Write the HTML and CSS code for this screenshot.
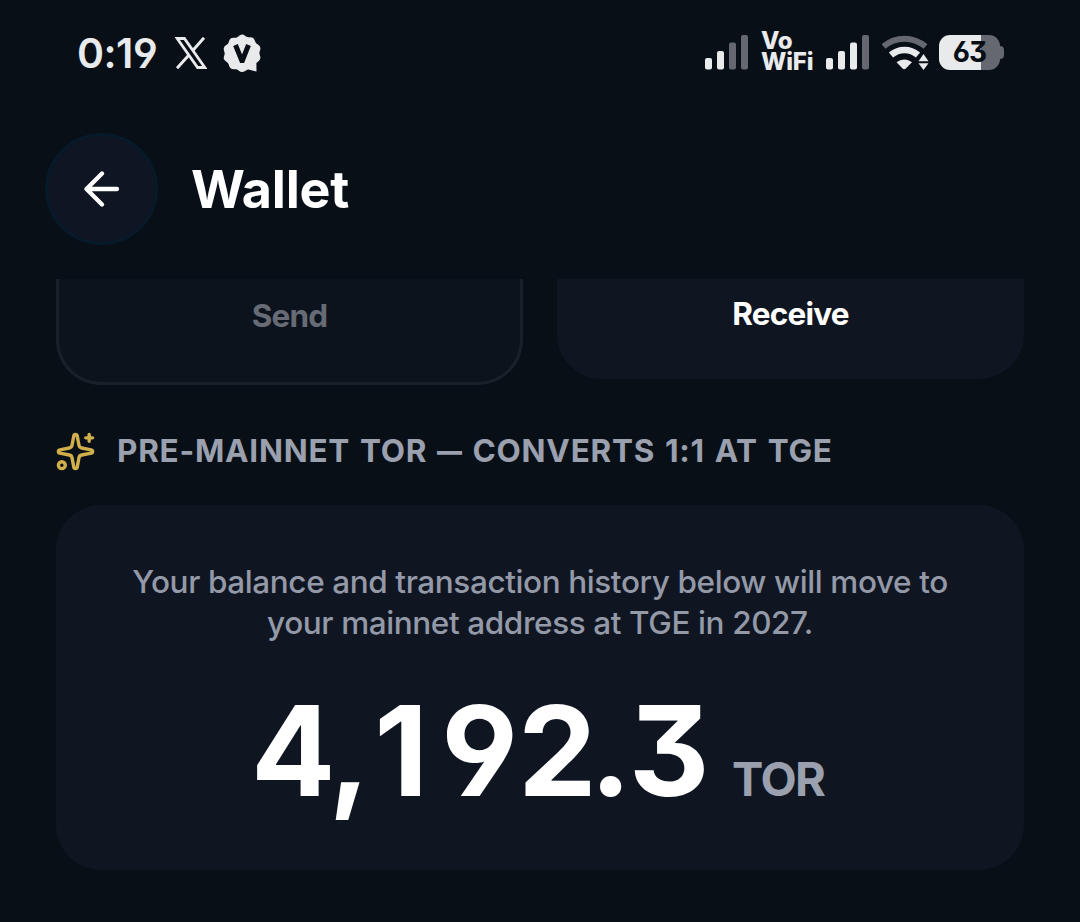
FILE: index.html
```html
<!DOCTYPE html>
<html lang="en">
<head>
<meta charset="utf-8">
<title>Wallet</title>
<link rel="stylesheet" href="styles.css">
</head>
<body>
<div class="status">
  <span class="clock">0:19</span>
  <svg class="x-logo" width="32" height="32" viewBox="0 0 32 32" fill="none" stroke="#e8eaeb"><path d="M2.200 1.500h7.200l20.400 29h-7.200z" stroke-width="2.800"/><path d="M29 .8 17.800 13.600M13.700 18.200 2 31.200" stroke-width="3"/></svg>
  <svg class="badge" width="38" height="38" viewBox="0 0 38 38"><path fill="#e8eaeb" d="M19 .5c2.300 0 3.400 2.100 5.200 2.600s4-.6 5.900.8 1.700 3.700 2.900 5.200 3.500 2 4.200 4.200-.8 3.900-.8 5.700 1.500 3.500.8 5.700-2.700 2.900-3.800 4.400l.1 8.400c-2.200-.5-4.200-1.100-6-1.500-1.400-.2-2.200-.7-3.400-.1-1.700.5-2.800 2-5.100 2s-3.400-2-5.200-2.500-4 .6-5.900-.8-1.700-3.800-2.800-5.300-3.500-2-4.200-4.200.8-3.900.8-5.700-1.500-3.500-.8-5.700 3.100-2.700 4.200-4.200.9-3.900 2.800-5.200 4.100-.2 5.900-.8S16.700.5 19 .5z"/><path fill="none" stroke="#080f17" stroke-width="5" d="m12.500 11 6.300 15.500h.6L25.500 11"/></svg>
  <div class="indicators">
    <svg width="44" height="36" viewBox="0 0 44 36" fill="#e8eaeb"><rect x="0" y="23" width="7" height="11.500" rx="2"/><rect x="12" y="16" width="7" height="18.500" rx="2"/><g fill="#65686e"><rect x="24" y="7.500" width="7" height="27" rx="2"/><rect x="36" y="0" width="7" height="34.500" rx="2"/></g></svg>
    <div class="vowifi"><span>Vo</span><span>WiFi</span></div>
    <svg class="bars2" width="44" height="36" viewBox="0 0 44 36" fill="#e8eaeb"><rect x="0" y="23" width="7" height="11.500" rx="2"/><rect x="12" y="16" width="7" height="18.500" rx="2"/><rect x="24" y="7.500" width="7" height="27" rx="2"/><rect x="36" y="0" width="7" height="34.500" rx="2" fill="#65686e"/></svg>
    <svg class="wifi" width="48" height="36" viewBox="0 0 48 36"><path fill="none" stroke="#65686e" stroke-width="6" d="M1.500 11.500C13.500 1 31 1 43.500 11.500"/><path fill="none" stroke="#e8eaeb" stroke-width="6.500" d="M9 20c8-6.800 19-6.800 27 0"/><path fill="#e8eaeb" d="M14.500 27.300c4.500-3.900 11-3.900 15.500 0l-6.200 6.200q-1.600 1.400-3.200 0z"/><path fill="#080f17" d="m41.500 15.500 7 9v5l-7 7-7-7v-5z"/><path fill="#e8eaeb" d="m41.500 19 5 7.300h-10zM36.500 28.200h10l-5 6.800z"/></svg>
    <div class="battery"><span>63</span></div>
  </div>
</div>
<header class="header">
  <div class="back"><svg width="36" height="36" viewBox="0 0 36 36" fill="none" stroke="#fff" stroke-width="4.300" stroke-linecap="round" stroke-linejoin="round"><path d="M33 18H2.500M18 2.500 2.500 18 18 33.500"/></svg></div>
  <h1 class="title">Wallet</h1>
</header>
<main class="content">
  <div class="actions">
    <div class="action send"><span>Send</span></div>
    <div class="action receive"><span>Receive</span></div>
  </div>
  <div class="section">
    <svg width="41" height="41" viewBox="0 0 24 24" fill="none" stroke="#d1af4b" stroke-width="2" stroke-linecap="round" stroke-linejoin="round"><path d="M11.017 2.814a1 1 0 0 1 1.966 0l1.051 5.558a2 2 0 0 0 1.594 1.594l5.558 1.051a1 1 0 0 1 0 1.966l-5.558 1.051a2 2 0 0 0-1.594 1.594l-1.051 5.558a1 1 0 0 1-1.966 0l-1.051-5.558a2 2 0 0 0-1.594-1.594l-5.558-1.051a1 1 0 0 1 0-1.966l5.558-1.051a2 2 0 0 0 1.594-1.594z"/><path d="M20 2v4M22 4h-4"/><circle cx="4" cy="20" r="2"/></svg>
    <h2>PRE-MAINNET TOR <span class="dash">—</span> CONVERTS 1:1 AT TGE</h2>
  </div>
  <section class="card">
    <p class="note">Your balance and transaction history below will move to<br>your mainnet address at TGE in 2027.</p>
    <div class="balance"><span class="amount"><span class="thousands">4</span><span class="comma">,</span><span class="one">1</span>9<span class="units">2</span>.3</span><span class="unit">TOR</span></div>
  </section>
</main>
</body>
</html>
```
FILE: styles.css
```css
* { box-sizing: border-box; }
body {
  margin: 0;
  width: 1080px;
  height: 922px;
  overflow: hidden;
  background: #080f17;
  color: #fff;
  font-family: Inter, "Liberation Sans", sans-serif;
  font-feature-settings: "cv03", "cv04", "cv09";
}
svg { display: block; flex: none; }
.status {
  height: 105px;
  padding: 0 76px 0 77px;
  display: flex;
  align-items: center;
  color: #e8eaeb;
}
.clock { width: 98px; font-size: 41px; font-weight: 600; letter-spacing: -0.5px; white-space: nowrap; }
.badge { margin-left: 16px; }
.indicators { margin-left: auto; display: flex; align-items: center; }
.vowifi {
  width: 55px;
  margin-left: 12px;
  padding-bottom: 3px;
  display: flex;
  flex-direction: column;
  font-size: 24px;
  line-height: 21px;
  font-weight: 800;
  letter-spacing: -0.200px;
}
.bars2 { margin-left: 10px; }
.wifi { margin-left: 12px; }
.battery {
  width: 65px;
  height: 35px;
  margin-left: 9px;
  display: flex;
  align-items: center;
}
.battery span {
  width: 61px;
  height: 35px;
  border-radius: 11px;
  background: linear-gradient(90deg, #e8eaeb 42px, #65686e 42px);
  color: #080f17;
  font-size: 28px;
  line-height: 35px;
  font-weight: 700;
  letter-spacing: -1px;
  text-align: center;
}
.battery::after {
  content: "";
  width: 4px;
  height: 13px;
  border-radius: 0 4px 4px 0;
  background: #65686e;
}
.header {
  height: 174px;
  padding: 28px 45px 0;
  display: flex;
  align-items: flex-start;
  gap: 33px;
}
.back {
  width: 113px;
  height: 112px;
  border-radius: 50%;
  border: 3px solid #071a29;
  background: #0f1522;
  display: flex;
  align-items: center;
  justify-content: center;
}
.title { margin: 0; font-size: 52px; line-height: 113px; font-weight: 700; letter-spacing: -0.200px; }
.content { padding: 0 56px; }
.actions {
  height: 106px;
  display: grid;
  grid-template-columns: 467px 467px;
  column-gap: 34px;
  align-items: start;
}
.action {
  text-align: center;
  font-size: 31.500px;
  line-height: 40px;
  font-weight: 650;
  letter-spacing: -0.800px;
  border-radius: 0 0 45px 45px;
}
.send {
  height: 106px;
  padding-top: 17px;
  background: #0c131d;
  border: 3px solid #1a202a;
  border-top: 0;
  color: #666b76;
}
.receive { height: 100px; padding-top: 15px; background: #0f1622; }
.section { height: 120px; padding-top: 12px; display: flex; align-items: center; }
.section svg { margin-left: -1px; }
h2 {
  margin: 0 0 0 21px;
  font-size: 31.500px;
  line-height: 40px;
  font-weight: 650;
  letter-spacing: 0.750px;
  word-spacing: 1.600px;
  white-space: nowrap;
  color: #9ba0ae;
}
.dash { font-size: 25px; line-height: 20px; font-weight: 900; vertical-align: 2px; }
.card { height: 365px; padding-top: 56px; border-radius: 45px; background: #0f1622; }
.note {
  margin: 0;
  text-align: center;
  font-size: 31.500px;
  line-height: 41px;
  font-weight: 500;
  letter-spacing: -0.400px;
  color: #9499a7;
  white-space: nowrap;
}
.balance { margin-top: 33px; height: 150px; display: flex; align-items: baseline; line-height: 150px; padding-left: 195px; }
.amount { width: 481px; font-size: 125px; font-weight: 700; white-space: nowrap; }
.thousands { letter-spacing: -7px; }
.comma { letter-spacing: 4px; }
.one { letter-spacing: 13px; }
.units { letter-spacing: -7px; }
.unit { font-size: 47px; font-weight: 650; letter-spacing: -1.500px; color: #9ba0ae; }
```
